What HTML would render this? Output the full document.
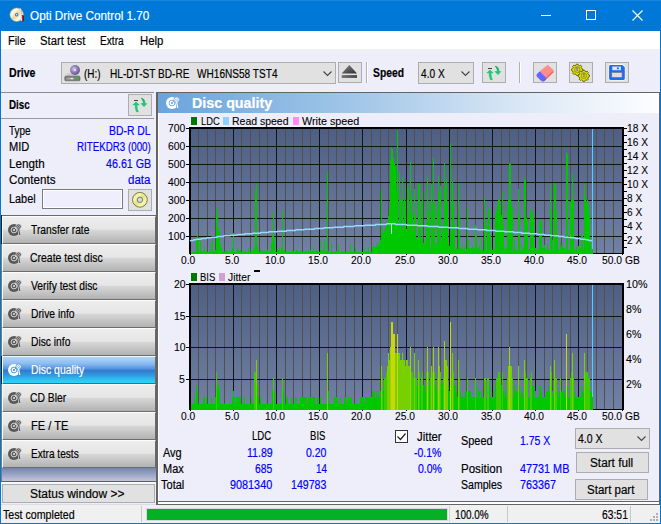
<!DOCTYPE html>
<html><head><meta charset="utf-8"><title>Opti Drive Control 1.70</title>
<style>
*{box-sizing:border-box;margin:0;padding:0}
html,body{width:661px;height:524px;overflow:hidden;background:#eeeefb}
body{font-family:"Liberation Sans",sans-serif;font-size:12px;color:#000;position:relative}
.a{position:absolute;white-space:nowrap}
span.a{-webkit-text-stroke:0.18px}
#win{position:absolute;left:0;top:0;width:661px;height:524px;background:#eeeefb;border:1px solid #0078d7;border-top:none}
#title{left:0;top:0;width:661px;height:31px;background:#0078d7}
#title .t{left:31px;top:8px;color:#fff;font-size:12.4px;letter-spacing:0px}
#menu{left:1px;top:31px;width:659px;height:18px;background:#fff}
#menu span{position:absolute;top:3px;font-size:12.3px}
.b{font-weight:bold}
.tb{position:absolute;top:62px;height:21px;width:24px;background:#e1e1e1;border:1px solid #adadad}
.combo{position:absolute;background:#e1e1e1;border:1px solid #adadad}
.blue{color:#1a1ae6}
.sb{position:absolute;left:2px;width:154px;height:28px;border-top:1px solid #fdfdfd;border-bottom:1px solid #6e6e6e;border-right:1px solid #6a6a6a;border-left:1px solid #fbfbfb;
 background:linear-gradient(#ededed 0%,#e6e6e6 46%,#d6d6d6 52%,#b2b2b2 100%)}
.sb span{position:absolute;left:29px;top:6px;font-size:12px;letter-spacing:-0.1px}
.sb svg{position:absolute;left:4px;top:5px}
.sb.sel{background:linear-gradient(#b2d6f8 0%,#8cbcf0 25%,#4e90de 47%,#3478cc 51%,#2f9ade 70%,#2cc4f2 88%,#28d8ff 100%);border-top-color:#e4fcff;border-bottom-color:#4a688c}
.sb.sel span{color:#fff}
.lbl{position:absolute;left:9px;font-size:12px}
.val{position:absolute;right:510px;font-size:12px;color:#1a1ae6}
.ax{position:absolute;font-size:12px;line-height:12px}
.st{position:absolute;font-size:12px}
.btn{position:absolute;background:#e1e1e1;border:1px solid #adadad;text-align:center;font-size:12px}
</style></head><body>
<div id="win"></div>
<div id="title" class="a"><div class="a" style="left:0;top:0;width:661px;height:1px;background:#1a85db"></div>
 <svg class="a" style="left:8px;top:6px" width="18" height="18" viewBox="0 0 18 18">
  <defs><linearGradient id="cd" x1="0" y1="0" x2="1" y2="1"><stop offset="0" stop-color="#d8c890"/><stop offset="0.28" stop-color="#fffbe8"/><stop offset="0.5" stop-color="#e2d4a4"/><stop offset="0.72" stop-color="#fffbe8"/><stop offset="1" stop-color="#cdbb82"/></linearGradient></defs>
  <circle cx="8.700" cy="8.700" r="6.800" fill="url(#cd)" stroke="#b8a870" stroke-width="0.5"/>
  <circle cx="8.700" cy="8.700" r="1.700" fill="#3a6eb8"/><circle cx="8.700" cy="8.700" r="0.700" fill="#fff"/>
  <path d="M13.600 8.800L15.900 9.400 16 15 13.800 15.600z" fill="#7a0c0c"/>
  <path d="M12.300 2.500L13.600 15" stroke="#e4e4e4" stroke-width="1.300"/><path d="M13.300 3L14.400 14" stroke="#9a9a9a" stroke-width="0.500"/>
 </svg>
 <span class="a" style="left:30.40px;top:9px;font-size:12.3px;line-height:14px;transform:scaleX(0.9544);transform-origin:0 0;color:#fff;">Opti Drive Control 1.70</span>
 <svg class="a" style="left:523px;top:0" width="138" height="31" viewBox="0 0 138 31"><g stroke="#fff" stroke-width="1" fill="none" shape-rendering="crispEdges">
  <path d="M18 15.5h10"/><rect x="63.5" y="10.5" width="9" height="9"/></g>
  <path d="M109.500 10.500l10 10M119.500 10.500l-10 10" stroke="#fff" stroke-width="1.1" fill="none"/></svg>
</div>
<div id="menu" class="a"></div><div class="a" style="left:1px;top:49px;width:659px;height:2px;background:#f0f0f0"></div><span class="a" style="left:8.10px;top:34px;font-size:12.3px;line-height:14px;transform:scaleX(0.8889);transform-origin:0 0;">File</span><span class="a" style="left:40.00px;top:34px;font-size:12.3px;line-height:14px;transform:scaleX(0.9207);transform-origin:0 0;">Start test</span><span class="a" style="left:100.40px;top:34px;font-size:12.3px;line-height:14px;transform:scaleX(0.8264);transform-origin:0 0;">Extra</span><span class="a" style="left:139.50px;top:34px;font-size:12.3px;line-height:14px;transform:scaleX(0.9209);transform-origin:0 0;">Help</span>

<!-- toolbar -->
<div class="combo" style="left:61px;top:62px;width:275px;height:22px">
 <svg class="a" style="left:2px;top:2px" width="18" height="18" viewBox="0 0 18 18"><defs><radialGradient id="gd" cx="40%" cy="40%" r="70%"><stop offset="0" stop-color="#d4cae8"/><stop offset="0.5" stop-color="#8e7cb4"/><stop offset="1" stop-color="#54427c"/></radialGradient></defs><path d="M0.800 11.400L3.600 8.600H13.400L16 11.400z" fill="#c8c8c8"/><rect x="0.800" y="11.200" width="15.200" height="4.600" rx="0.800" fill="#7c7c7c" stroke="#5c5c5c" stroke-width="0.6"/><rect x="2.300" y="12.600" width="8" height="2" fill="#a4a4a4"/><rect x="6.500" y="13.200" width="2.500" height="0.900" fill="#fff"/><circle cx="11" cy="5" r="4.900" fill="url(#gd)"/><circle cx="11" cy="5" r="0.900" fill="#f4f2fc"/><path d="M12 12.200h1.600v2.400h-1.600zM11.600 12.900h2.400v1h-2.400z" fill="#20c820"/></svg>
 
 <svg class="a" style="left:261px;top:8px" width="10" height="6" viewBox="0 0 10 6"><path d="M0.500 0.500L4.500 4.500 8.500 0.500" stroke="#444" stroke-width="1.1" fill="none"/></svg>
</div>
<div class="tb" style="left:338px"><svg class="a" style="left:-1px;top:-1px" width="24" height="22" viewBox="0 0 24 22"><defs><linearGradient id="ge" x1="0" y1="0" x2="1" y2="1"><stop offset="0" stop-color="#8a8a8a"/><stop offset="1" stop-color="#2c2c2c"/></linearGradient></defs><path d="M11.300 3L19 11.400H3.700z" fill="url(#ge)"/><rect x="3.700" y="13" width="15.300" height="2.800" fill="url(#ge)"/></svg></div>
<div class="a" style="left:366px;top:62px;width:1px;height:21px;background:#b0b0b0"></div>
<div class="a" style="left:367px;top:62px;width:1px;height:21px;background:#fff"></div>

<div class="combo" style="left:418px;top:62px;width:56px;height:22px">
 <svg class="a" style="left:42px;top:8px" width="10" height="6" viewBox="0 0 10 6"><path d="M0.500 0.500L4.500 4.500 8.500 0.500" stroke="#444" stroke-width="1.1" fill="none"/></svg></div>
<div class="tb" style="left:482px"><svg class="a" style="left:-1px;top:-1px" width="24" height="22" viewBox="0 0 24 22"><defs><linearGradient id="ga" x1="0" y1="0" x2="1" y2="1"><stop offset="0" stop-color="#1f9a5c"/><stop offset="1" stop-color="#3fd890"/></linearGradient></defs><path d="M8 7.200L12.600 11.600H9.700C9.800 14.500 10.300 16.300 11.400 18.200L8.200 18.600C7 16.400 6.500 14.400 6.500 11.600H3.500z" fill="#2ec27a" stroke="#eafff4" stroke-width="0.5"/><path d="M13.200 3.600C15.800 4 17.600 5.800 17.800 9H20.300L16 13.400 11.800 9H14.600C14.500 7 13.800 5.600 12.600 4.600z" fill="url(#ga)" stroke="#eafff4" stroke-width="0.5"/><rect x="6" y="6" width="4" height="1" fill="#444"/></svg></div>
<div class="a" style="left:519px;top:62px;width:1px;height:21px;background:#b0b0b0"></div>
<div class="a" style="left:520px;top:62px;width:1px;height:21px;background:#fff"></div>
<div class="tb" style="left:533px"><svg class="a" style="left:-1px;top:-1px" width="24" height="22" viewBox="0 0 24 22"><path d="M14.800 2.700L20.500 8 13 15.600 6.800 9.300z" fill="#ff8c8c"/><path d="M20.500 8L20.300 10.400 12.600 18 13 15.600z" fill="#ff5a5a"/><path d="M6.800 9.300L13 15.600 10.400 18.400C9.400 19 8.400 19 7.600 18.400L3.800 14.400C3.200 13.400 3.400 12.600 4 12z" fill="#6464ff"/><path d="M13 15.600L12.600 18 10.400 19.600 8 19 10.400 18.400z" fill="#3232f0"/></svg></div>
<div class="tb" style="left:569px"><svg class="a" style="left:-1px;top:-1px" width="24" height="22" viewBox="0 0 24 22"><path d="M13.8 7.0L13.8 8.6L12.8 9.0L12.2 10.2L12.8 11.2L11.6 12.4L10.6 11.8L9.4 12.4L9.0 13.4L7.4 13.4L7.0 12.4L5.8 11.8L4.8 12.4L3.6 11.2L4.2 10.2L3.6 9.0L2.6 8.6L2.6 7.0L3.6 6.6L4.2 5.4L3.6 4.4L4.8 3.2L5.8 3.8L7.0 3.2L7.4 2.2L9.0 2.2L9.4 3.2L10.6 3.8L11.6 3.2L12.8 4.4L12.2 5.4L12.8 6.6z" fill="#e2e200" stroke="#66660a" stroke-width="1" stroke-linejoin="round"/><circle cx="8.2" cy="7.8" r="2.600" fill="none" stroke="#a8a800" stroke-width="1.200"/><rect x="7.3" y="4.2" width="1.800" height="4.800" fill="#8c8c8c"/><path d="M20.4 13.0L20.4 14.6L19.4 15.0L18.8 16.2L19.4 17.2L18.2 18.4L17.2 17.8L16.0 18.4L15.6 19.4L14.0 19.4L13.6 18.4L12.4 17.8L11.4 18.4L10.2 17.2L10.8 16.2L10.2 15.0L9.2 14.6L9.2 13.0L10.2 12.6L10.8 11.4L10.2 10.4L11.4 9.2L12.4 9.8L13.6 9.2L14.0 8.2L15.6 8.2L16.0 9.2L17.2 9.8L18.2 9.2L19.4 10.4L18.8 11.4L19.4 12.6z" fill="#e2e200" stroke="#66660a" stroke-width="1" stroke-linejoin="round"/><circle cx="14.8" cy="13.8" r="2.600" fill="none" stroke="#a8a800" stroke-width="1.200"/><rect x="13.9" y="10.2" width="1.800" height="4.800" fill="#8c8c8c"/></svg></div>
<div class="tb" style="left:605px"><svg class="a" style="left:-1px;top:-1px" width="24" height="22" viewBox="0 0 24 22"><path d="M5.400 2.300H17.600L20.400 5V17C20.400 17.800 19.800 18.400 19 18.400H5.400C4.400 18.400 3.600 17.800 3.600 17V4C3.600 3 4.400 2.300 5.400 2.300z" fill="#fff"/><path d="M5.600 2.900H17.300L19.800 5.300V16.600C19.800 17.400 19.300 17.900 18.500 17.900H5.600C4.700 17.900 4.100 17.400 4.100 16.600V4.300C4.100 3.500 4.700 2.900 5.600 2.900z" fill="#1c6cf0"/><rect x="7.300" y="4.500" width="8.600" height="3.700" fill="#e4e6f2"/><circle cx="12.900" cy="6.350" r="1.100" fill="#1c6cf0"/><rect x="6.700" y="10.300" width="10.400" height="5.300" fill="#dedede" stroke="#6c6c6c" stroke-width="0.7"/></svg></div>

<span class="a" style="left:9.00px;top:66px;font-size:12.3px;line-height:14px;transform:scaleX(0.8604);transform-origin:0 0;font-weight:bold;">Drive</span><span class="a" style="left:372.90px;top:66px;font-size:12.3px;line-height:14px;transform:scaleX(0.8401);transform-origin:0 0;font-weight:bold;">Speed</span><span class="a" style="left:84.00px;top:67px;font-size:12.3px;line-height:14px;transform:scaleX(0.8049);transform-origin:0 0;">(H:)</span><span class="a" style="left:110.20px;top:67px;font-size:12.3px;line-height:14px;transform:scaleX(0.8202);transform-origin:0 0;">HL-DT-ST BD-RE</span><span class="a" style="left:197.10px;top:67px;font-size:12.3px;line-height:14px;transform:scaleX(0.8198);transform-origin:0 0;">WH16NS58 TST4</span><span class="a" style="left:420.90px;top:67px;font-size:12.3px;line-height:14px;transform:scaleX(0.8258);transform-origin:0 0;">4.0 X</span>
<!-- left panel -->
<div class="a" style="left:1px;top:92px;width:153px;height:1px;background:#8c8c8c"></div>
<div class="a" style="left:1px;top:118px;width:153px;height:1px;background:#9a9a9a"></div>
<span class="a" style="left:9.00px;top:98px;font-size:12.3px;line-height:14px;transform:scaleX(0.8000);transform-origin:0 0;font-weight:bold;">Disc</span><span class="a" style="left:8.80px;top:124px;font-size:12.3px;line-height:14px;transform:scaleX(0.8052);transform-origin:0 0;">Type</span><span class="a" style="left:109.30px;top:124px;font-size:12.3px;line-height:14px;transform:scaleX(0.8455);transform-origin:0 0;color:#0000ff;">BD-R DL</span><span class="a" style="left:8.80px;top:140px;font-size:12.3px;line-height:14px;transform:scaleX(0.9022);transform-origin:0 0;">MID</span><span class="a" style="left:77.10px;top:140px;font-size:12.3px;line-height:14px;transform:scaleX(0.7935);transform-origin:0 0;color:#0000ff;">RITEKDR3 (000)</span><span class="a" style="left:8.80px;top:157px;font-size:12.3px;line-height:14px;transform:scaleX(0.9468);transform-origin:0 0;">Length</span><span class="a" style="left:105.60px;top:157px;font-size:12.3px;line-height:14px;transform:scaleX(0.8712);transform-origin:0 0;color:#0000ff;">46.61 GB</span><span class="a" style="left:8.80px;top:173px;font-size:12.3px;line-height:14px;transform:scaleX(0.9451);transform-origin:0 0;">Contents</span><span class="a" style="left:128.40px;top:173px;font-size:12.3px;line-height:14px;transform:scaleX(0.9375);transform-origin:0 0;color:#0000ff;">data</span><span class="a" style="left:8.80px;top:192px;font-size:12.3px;line-height:14px;transform:scaleX(0.8837);transform-origin:0 0;">Label</span>
<div class="tb" style="left:128px;top:94px;height:22px"><svg class="a" style="left:-1px;top:-1px" width="24" height="22" viewBox="0 0 24 22"><defs><linearGradient id="ga" x1="0" y1="0" x2="1" y2="1"><stop offset="0" stop-color="#1f9a5c"/><stop offset="1" stop-color="#3fd890"/></linearGradient></defs><path d="M8 7.200L12.600 11.600H9.700C9.800 14.500 10.300 16.300 11.400 18.200L8.200 18.600C7 16.400 6.500 14.400 6.500 11.600H3.500z" fill="#2ec27a" stroke="#eafff4" stroke-width="0.5"/><path d="M13.200 3.600C15.800 4 17.600 5.800 17.800 9H20.300L16 13.400 11.800 9H14.600C14.500 7 13.800 5.600 12.600 4.600z" fill="url(#ga)" stroke="#eafff4" stroke-width="0.5"/><rect x="6" y="6" width="4" height="1" fill="#444"/></svg></div>
<div class="a" style="left:42px;top:189px;width:81px;height:20px;border:1px solid #7a7a7a;background:#eeeefd;box-shadow:inset 0 0 0 1px #fff"></div>
<div class="tb" style="left:128px;top:189px;height:22px"><svg class="a" style="left:-1px;top:-1px" width="24" height="22" viewBox="0 0 24 22"><defs><linearGradient id="gy" x1="0" y1="0" x2="1" y2="1"><stop offset="0" stop-color="#dcdc70"/><stop offset="0.3" stop-color="#f6f6b4"/><stop offset="0.5" stop-color="#e2e278"/><stop offset="0.7" stop-color="#f6f6b4"/><stop offset="1" stop-color="#dcdc70"/></linearGradient></defs><circle cx="11.900" cy="10.800" r="7.400" fill="url(#gy)" stroke="#606030" stroke-width="0.8"/><circle cx="11.900" cy="10.800" r="2.700" fill="#d4dcd4" stroke="#707878" stroke-width="1"/></svg></div>

<div class="a" style="left:1px;top:215px;width:156px;height:1px;background:#6a6a6a"></div>
<div class="a" style="left:2px;top:468px;width:154px;height:13px;background:linear-gradient(#7385ae,#c2c4da)"></div>
<div class="a" style="left:1px;top:481px;width:155px;height:1px;background:#606060"></div>
<div class="a" style="left:1px;top:482px;width:155px;height:2px;background:#f8f8ff"></div>
<div class="a" style="left:1px;top:216px;width:1px;height:265px;background:#7c7c7c"></div>
<div class="sb" style="top:216px"><svg width="20" height="16" viewBox="0 0 20 16"><circle cx="7" cy="8" r="6" fill="#585858"/><circle cx="7" cy="8" r="2.900" fill="none" stroke="#dedede" stroke-width="0.9"/><circle cx="7" cy="8" r="1.100" fill="#dedede"/><path d="M7.500 7.500L11 3.500" stroke="#dedede" stroke-width="1"/><circle cx="11.600" cy="4.600" r="2.700" fill="#585858" stroke="#dedede" stroke-width="0.8"/><circle cx="11.600" cy="4.600" r="1" fill="none" stroke="#dedede" stroke-width="0.6"/><path d="M11.400 7L12.800 13.200" stroke="#dedede" stroke-width="2.200"/><path d="M11.600 7L12.800 13" stroke="#585858" stroke-width="1.200"/></svg></div><span class="a" style="left:31.10px;top:223px;font-size:12.6px;line-height:14px;transform:scaleX(0.8159);transform-origin:0 0;color:#000;">Transfer rate</span>
<div class="sb" style="top:244px"><svg width="20" height="16" viewBox="0 0 20 16"><circle cx="7" cy="8" r="6" fill="#585858"/><circle cx="7" cy="8" r="2.900" fill="none" stroke="#dedede" stroke-width="0.9"/><circle cx="7" cy="8" r="1.100" fill="#dedede"/><path d="M7.500 7.500L11 3.500" stroke="#dedede" stroke-width="1"/><circle cx="11.600" cy="4.600" r="2.700" fill="#585858" stroke="#dedede" stroke-width="0.8"/><circle cx="11.600" cy="4.600" r="1" fill="none" stroke="#dedede" stroke-width="0.6"/><path d="M11.400 7L12.800 13.200" stroke="#dedede" stroke-width="2.200"/><path d="M11.600 7L12.800 13" stroke="#585858" stroke-width="1.200"/></svg></div><span class="a" style="left:30.30px;top:251px;font-size:12.6px;line-height:14px;transform:scaleX(0.8309);transform-origin:0 0;color:#000;">Create test disc</span>
<div class="sb" style="top:272px"><svg width="20" height="16" viewBox="0 0 20 16"><circle cx="7" cy="8" r="6" fill="#585858"/><circle cx="7" cy="8" r="2.900" fill="none" stroke="#dedede" stroke-width="0.9"/><circle cx="7" cy="8" r="1.100" fill="#dedede"/><path d="M7.500 7.500L11 3.500" stroke="#dedede" stroke-width="1"/><circle cx="11.600" cy="4.600" r="2.700" fill="#585858" stroke="#dedede" stroke-width="0.8"/><circle cx="11.600" cy="4.600" r="1" fill="none" stroke="#dedede" stroke-width="0.6"/><path d="M11.400 7L12.800 13.200" stroke="#dedede" stroke-width="2.200"/><path d="M11.600 7L12.800 13" stroke="#585858" stroke-width="1.200"/></svg></div><span class="a" style="left:31.10px;top:279px;font-size:12.6px;line-height:14px;transform:scaleX(0.8190);transform-origin:0 0;color:#000;">Verify test disc</span>
<div class="sb" style="top:300px"><svg width="20" height="16" viewBox="0 0 20 16"><circle cx="7" cy="8" r="6" fill="#585858"/><circle cx="7" cy="8" r="2.900" fill="none" stroke="#dedede" stroke-width="0.9"/><circle cx="7" cy="8" r="1.100" fill="#dedede"/><path d="M7.500 7.500L11 3.500" stroke="#dedede" stroke-width="1"/><circle cx="11.600" cy="4.600" r="2.700" fill="#585858" stroke="#dedede" stroke-width="0.8"/><circle cx="11.600" cy="4.600" r="1" fill="none" stroke="#dedede" stroke-width="0.6"/><path d="M11.400 7L12.800 13.200" stroke="#dedede" stroke-width="2.200"/><path d="M11.600 7L12.800 13" stroke="#585858" stroke-width="1.200"/></svg></div><span class="a" style="left:31.10px;top:307px;font-size:12.6px;line-height:14px;transform:scaleX(0.8177);transform-origin:0 0;color:#000;">Drive info</span>
<div class="sb" style="top:328px"><svg width="20" height="16" viewBox="0 0 20 16"><circle cx="7" cy="8" r="6" fill="#585858"/><circle cx="7" cy="8" r="2.900" fill="none" stroke="#dedede" stroke-width="0.9"/><circle cx="7" cy="8" r="1.100" fill="#dedede"/><path d="M7.500 7.500L11 3.500" stroke="#dedede" stroke-width="1"/><circle cx="11.600" cy="4.600" r="2.700" fill="#585858" stroke="#dedede" stroke-width="0.8"/><circle cx="11.600" cy="4.600" r="1" fill="none" stroke="#dedede" stroke-width="0.6"/><path d="M11.400 7L12.800 13.200" stroke="#dedede" stroke-width="2.200"/><path d="M11.600 7L12.800 13" stroke="#585858" stroke-width="1.200"/></svg></div><span class="a" style="left:31.10px;top:335px;font-size:12.6px;line-height:14px;transform:scaleX(0.8157);transform-origin:0 0;color:#000;">Disc info</span>
<div class="sb sel" style="top:356px"><svg width="20" height="16" viewBox="0 0 20 16"><circle cx="7" cy="8" r="6" fill="#ffffff"/><circle cx="7" cy="8" r="2.900" fill="none" stroke="#3f8fe8" stroke-width="0.9"/><circle cx="7" cy="8" r="1.100" fill="#3f8fe8"/><path d="M7.500 7.500L11 3.500" stroke="#3f8fe8" stroke-width="1"/><circle cx="11.600" cy="4.600" r="2.700" fill="#ffffff" stroke="#3f8fe8" stroke-width="0.8"/><circle cx="11.600" cy="4.600" r="1" fill="none" stroke="#3f8fe8" stroke-width="0.6"/><path d="M11.400 7L12.800 13.200" stroke="#3f8fe8" stroke-width="2.200"/><path d="M11.600 7L12.800 13" stroke="#ffffff" stroke-width="1.200"/></svg></div><span class="a" style="left:31.10px;top:363px;font-size:12.6px;line-height:14px;transform:scaleX(0.8261);transform-origin:0 0;color:#fff;">Disc quality</span>
<div class="sb" style="top:384px"><svg width="20" height="16" viewBox="0 0 20 16"><circle cx="7" cy="8" r="6" fill="#585858"/><circle cx="7" cy="8" r="2.900" fill="none" stroke="#dedede" stroke-width="0.9"/><circle cx="7" cy="8" r="1.100" fill="#dedede"/><path d="M7.500 7.500L11 3.500" stroke="#dedede" stroke-width="1"/><circle cx="11.600" cy="4.600" r="2.700" fill="#585858" stroke="#dedede" stroke-width="0.8"/><circle cx="11.600" cy="4.600" r="1" fill="none" stroke="#dedede" stroke-width="0.6"/><path d="M11.400 7L12.800 13.200" stroke="#dedede" stroke-width="2.200"/><path d="M11.600 7L12.800 13" stroke="#585858" stroke-width="1.200"/></svg></div><span class="a" style="left:30.30px;top:391px;font-size:12.6px;line-height:14px;transform:scaleX(0.8231);transform-origin:0 0;color:#000;">CD Bler</span>
<div class="sb" style="top:412px"><svg width="20" height="16" viewBox="0 0 20 16"><circle cx="7" cy="8" r="6" fill="#585858"/><circle cx="7" cy="8" r="2.900" fill="none" stroke="#dedede" stroke-width="0.9"/><circle cx="7" cy="8" r="1.100" fill="#dedede"/><path d="M7.500 7.500L11 3.500" stroke="#dedede" stroke-width="1"/><circle cx="11.600" cy="4.600" r="2.700" fill="#585858" stroke="#dedede" stroke-width="0.8"/><circle cx="11.600" cy="4.600" r="1" fill="none" stroke="#dedede" stroke-width="0.6"/><path d="M11.400 7L12.800 13.200" stroke="#dedede" stroke-width="2.200"/><path d="M11.600 7L12.800 13" stroke="#585858" stroke-width="1.200"/></svg></div><span class="a" style="left:31.10px;top:419px;font-size:12.6px;line-height:14px;transform:scaleX(0.8824);transform-origin:0 0;color:#000;">FE / TE</span>
<div class="sb" style="top:440px"><svg width="20" height="16" viewBox="0 0 20 16"><circle cx="7" cy="8" r="6" fill="#585858"/><circle cx="7" cy="8" r="2.900" fill="none" stroke="#dedede" stroke-width="0.9"/><circle cx="7" cy="8" r="1.100" fill="#dedede"/><path d="M7.500 7.500L11 3.500" stroke="#dedede" stroke-width="1"/><circle cx="11.600" cy="4.600" r="2.700" fill="#585858" stroke="#dedede" stroke-width="0.8"/><circle cx="11.600" cy="4.600" r="1" fill="none" stroke="#dedede" stroke-width="0.6"/><path d="M11.400 7L12.800 13.200" stroke="#dedede" stroke-width="2.200"/><path d="M11.600 7L12.800 13" stroke="#585858" stroke-width="1.200"/></svg></div><span class="a" style="left:31.10px;top:447px;font-size:12.6px;line-height:14px;transform:scaleX(0.8017);transform-origin:0 0;color:#000;">Extra tests</span>
<div class="a" style="left:1px;top:215px;width:1px;height:29px;background:#1a1a1a"></div><div class="a" style="left:1px;top:356px;width:1px;height:28px;background:#1a1a1a"></div>
<div class="btn" style="left:2px;top:484px;width:153px;height:19px"></div><span class="a" style="left:29.90px;top:487px;font-size:12.3px;line-height:14px;transform:scaleX(0.9722);transform-origin:0 0;">Status window &gt;&gt;</span>

<!-- main panel -->
<div class="a" style="left:156px;top:92px;width:504px;height:413px;border:1px solid #646464;border-width:1px 1px 1px 2px"></div>
<div class="a" style="left:158px;top:501px;width:501px;height:1px;background:#646464"></div>
<div class="a" style="left:158px;top:502px;width:501px;height:2px;background:#fff"></div>
<div class="a" style="left:158px;top:113px;width:1px;height:388px;background:#fff"></div>
<div class="a" style="left:158px;top:93px;width:501px;height:20px;background:linear-gradient(90deg,#6aa4db 0%,#a6c9e9 42%,#d9e7f5 72%,#fefeff 100%)"></div>
<svg class="a" style="left:165px;top:95px" width="20" height="16" viewBox="0 0 20 16"><circle cx="7" cy="8" r="6" fill="#ffffff"/><circle cx="7" cy="8" r="2.900" fill="none" stroke="#6ea7dc" stroke-width="0.9"/><circle cx="7" cy="8" r="1.100" fill="#6ea7dc"/><path d="M7.500 7.500L11 3.500" stroke="#6ea7dc" stroke-width="1"/><circle cx="11.600" cy="4.600" r="2.700" fill="#ffffff" stroke="#6ea7dc" stroke-width="0.8"/><circle cx="11.600" cy="4.600" r="1" fill="none" stroke="#6ea7dc" stroke-width="0.6"/><path d="M11.400 7L12.800 13.200" stroke="#6ea7dc" stroke-width="2.200"/><path d="M11.600 7L12.800 13" stroke="#ffffff" stroke-width="1.200"/></svg><span class="a" style="left:191.60px;top:95px;font-size:14px;line-height:16px;transform:scaleX(1.0204);transform-origin:0 0;font-weight:bold;color:#fff;">Disc quality</span>

<svg class="a" style="left:0;top:0" width="661" height="524" viewBox="0 0 661 524" shape-rendering="crispEdges">
<defs><linearGradient id="pg" x1="0" y1="0" x2="0" y2="1"><stop offset="0" stop-color="#4f5f84"/><stop offset="1" stop-color="#7081a3"/></linearGradient></defs>
<rect x="189" y="127" width="435" height="127" fill="#000"/>
<rect x="191" y="129" width="431" height="124" fill="url(#pg)"/>
<rect x="198" y="129" width="1" height="124" fill="#505050"/><rect x="207" y="129" width="1" height="124" fill="#505050"/><rect x="215" y="129" width="1" height="124" fill="#505050"/><rect x="224" y="129" width="1" height="124" fill="#505050"/><rect x="233" y="129" width="1" height="124" fill="#141414"/><rect x="241" y="129" width="1" height="124" fill="#505050"/><rect x="250" y="129" width="1" height="124" fill="#505050"/><rect x="259" y="129" width="1" height="124" fill="#505050"/><rect x="267" y="129" width="1" height="124" fill="#505050"/><rect x="276" y="129" width="1" height="124" fill="#141414"/><rect x="285" y="129" width="1" height="124" fill="#505050"/><rect x="293" y="129" width="1" height="124" fill="#505050"/><rect x="302" y="129" width="1" height="124" fill="#505050"/><rect x="310" y="129" width="1" height="124" fill="#505050"/><rect x="319" y="129" width="1" height="124" fill="#141414"/><rect x="328" y="129" width="1" height="124" fill="#505050"/><rect x="336" y="129" width="1" height="124" fill="#505050"/><rect x="345" y="129" width="1" height="124" fill="#505050"/><rect x="354" y="129" width="1" height="124" fill="#505050"/><rect x="362" y="129" width="1" height="124" fill="#141414"/><rect x="371" y="129" width="1" height="124" fill="#505050"/><rect x="380" y="129" width="1" height="124" fill="#505050"/><rect x="388" y="129" width="1" height="124" fill="#505050"/><rect x="397" y="129" width="1" height="124" fill="#505050"/><rect x="406" y="129" width="1" height="124" fill="#141414"/><rect x="414" y="129" width="1" height="124" fill="#505050"/><rect x="423" y="129" width="1" height="124" fill="#505050"/><rect x="431" y="129" width="1" height="124" fill="#505050"/><rect x="440" y="129" width="1" height="124" fill="#505050"/><rect x="449" y="129" width="1" height="124" fill="#141414"/><rect x="457" y="129" width="1" height="124" fill="#505050"/><rect x="466" y="129" width="1" height="124" fill="#505050"/><rect x="475" y="129" width="1" height="124" fill="#505050"/><rect x="483" y="129" width="1" height="124" fill="#505050"/><rect x="492" y="129" width="1" height="124" fill="#141414"/><rect x="501" y="129" width="1" height="124" fill="#505050"/><rect x="509" y="129" width="1" height="124" fill="#505050"/><rect x="518" y="129" width="1" height="124" fill="#505050"/><rect x="526" y="129" width="1" height="124" fill="#505050"/><rect x="535" y="129" width="1" height="124" fill="#141414"/><rect x="544" y="129" width="1" height="124" fill="#505050"/><rect x="552" y="129" width="1" height="124" fill="#505050"/><rect x="561" y="129" width="1" height="124" fill="#505050"/><rect x="570" y="129" width="1" height="124" fill="#505050"/><rect x="578" y="129" width="1" height="124" fill="#141414"/><rect x="587" y="129" width="1" height="124" fill="#505050"/><rect x="596" y="129" width="1" height="124" fill="#505050"/><rect x="604" y="129" width="1" height="124" fill="#505050"/><rect x="613" y="129" width="1" height="124" fill="#505050"/><rect x="190.0" y="146" width="432.0" height="1" fill="#141414"/><rect x="190.0" y="164" width="432.0" height="1" fill="#141414"/><rect x="190.0" y="182" width="432.0" height="1" fill="#141414"/><rect x="190.0" y="200" width="432.0" height="1" fill="#141414"/><rect x="190.0" y="218" width="432.0" height="1" fill="#141414"/><rect x="190.0" y="236" width="432.0" height="1" fill="#141414"/>
<rect x="189" y="283" width="435" height="127" fill="#000"/>
<rect x="191" y="285" width="431" height="124" fill="url(#pg)"/>
<rect x="198" y="285" width="1" height="124" fill="#505050"/><rect x="207" y="285" width="1" height="124" fill="#505050"/><rect x="215" y="285" width="1" height="124" fill="#505050"/><rect x="224" y="285" width="1" height="124" fill="#505050"/><rect x="233" y="285" width="1" height="124" fill="#141414"/><rect x="241" y="285" width="1" height="124" fill="#505050"/><rect x="250" y="285" width="1" height="124" fill="#505050"/><rect x="259" y="285" width="1" height="124" fill="#505050"/><rect x="267" y="285" width="1" height="124" fill="#505050"/><rect x="276" y="285" width="1" height="124" fill="#141414"/><rect x="285" y="285" width="1" height="124" fill="#505050"/><rect x="293" y="285" width="1" height="124" fill="#505050"/><rect x="302" y="285" width="1" height="124" fill="#505050"/><rect x="310" y="285" width="1" height="124" fill="#505050"/><rect x="319" y="285" width="1" height="124" fill="#141414"/><rect x="328" y="285" width="1" height="124" fill="#505050"/><rect x="336" y="285" width="1" height="124" fill="#505050"/><rect x="345" y="285" width="1" height="124" fill="#505050"/><rect x="354" y="285" width="1" height="124" fill="#505050"/><rect x="362" y="285" width="1" height="124" fill="#141414"/><rect x="371" y="285" width="1" height="124" fill="#505050"/><rect x="380" y="285" width="1" height="124" fill="#505050"/><rect x="388" y="285" width="1" height="124" fill="#505050"/><rect x="397" y="285" width="1" height="124" fill="#505050"/><rect x="406" y="285" width="1" height="124" fill="#141414"/><rect x="414" y="285" width="1" height="124" fill="#505050"/><rect x="423" y="285" width="1" height="124" fill="#505050"/><rect x="431" y="285" width="1" height="124" fill="#505050"/><rect x="440" y="285" width="1" height="124" fill="#505050"/><rect x="449" y="285" width="1" height="124" fill="#141414"/><rect x="457" y="285" width="1" height="124" fill="#505050"/><rect x="466" y="285" width="1" height="124" fill="#505050"/><rect x="475" y="285" width="1" height="124" fill="#505050"/><rect x="483" y="285" width="1" height="124" fill="#505050"/><rect x="492" y="285" width="1" height="124" fill="#141414"/><rect x="501" y="285" width="1" height="124" fill="#505050"/><rect x="509" y="285" width="1" height="124" fill="#505050"/><rect x="518" y="285" width="1" height="124" fill="#505050"/><rect x="526" y="285" width="1" height="124" fill="#505050"/><rect x="535" y="285" width="1" height="124" fill="#141414"/><rect x="544" y="285" width="1" height="124" fill="#505050"/><rect x="552" y="285" width="1" height="124" fill="#505050"/><rect x="561" y="285" width="1" height="124" fill="#505050"/><rect x="570" y="285" width="1" height="124" fill="#505050"/><rect x="578" y="285" width="1" height="124" fill="#141414"/><rect x="587" y="285" width="1" height="124" fill="#505050"/><rect x="596" y="285" width="1" height="124" fill="#505050"/><rect x="604" y="285" width="1" height="124" fill="#505050"/><rect x="613" y="285" width="1" height="124" fill="#505050"/><rect x="190.0" y="316" width="432.0" height="1" fill="#141414"/><rect x="190.0" y="347" width="432.0" height="1" fill="#141414"/><rect x="190.0" y="379" width="432.0" height="1" fill="#141414"/>
<rect x="186" y="236" width="3" height="1" fill="#000"/>
<rect x="186" y="218" width="3" height="1" fill="#000"/>
<rect x="186" y="200" width="3" height="1" fill="#000"/>
<rect x="186" y="182" width="3" height="1" fill="#000"/>
<rect x="186" y="164" width="3" height="1" fill="#000"/>
<rect x="186" y="146" width="3" height="1" fill="#000"/>
<rect x="186" y="128" width="3" height="1" fill="#000"/>
<rect x="186" y="379" width="3" height="1" fill="#000"/>
<rect x="186" y="347" width="3" height="1" fill="#000"/>
<rect x="186" y="316" width="3" height="1" fill="#000"/>
<rect x="186" y="284" width="3" height="1" fill="#000"/>
<rect x="624" y="247" width="3" height="1" fill="#000"/>
<rect x="624" y="240" width="3" height="1" fill="#000"/>
<rect x="624" y="233" width="3" height="1" fill="#000"/>
<rect x="624" y="226" width="3" height="1" fill="#000"/>
<rect x="624" y="219" width="3" height="1" fill="#000"/>
<rect x="624" y="212" width="3" height="1" fill="#000"/>
<rect x="624" y="205" width="3" height="1" fill="#000"/>
<rect x="624" y="198" width="3" height="1" fill="#000"/>
<rect x="624" y="191" width="3" height="1" fill="#000"/>
<rect x="624" y="184" width="3" height="1" fill="#000"/>
<rect x="624" y="177" width="3" height="1" fill="#000"/>
<rect x="624" y="170" width="3" height="1" fill="#000"/>
<rect x="624" y="163" width="3" height="1" fill="#000"/>
<rect x="624" y="156" width="3" height="1" fill="#000"/>
<rect x="624" y="149" width="3" height="1" fill="#000"/>
<rect x="624" y="142" width="3" height="1" fill="#000"/>
<rect x="624" y="135" width="3" height="1" fill="#000"/>
<rect x="624" y="128" width="3" height="1" fill="#000"/>
<rect x="190" y="254" width="1" height="1" fill="#000"/>
<rect x="233" y="254" width="1" height="1" fill="#000"/>
<rect x="276" y="254" width="1" height="1" fill="#000"/>
<rect x="319" y="254" width="1" height="1" fill="#000"/>
<rect x="362" y="254" width="1" height="1" fill="#000"/>
<rect x="406" y="254" width="1" height="1" fill="#000"/>
<rect x="449" y="254" width="1" height="1" fill="#000"/>
<rect x="492" y="254" width="1" height="1" fill="#000"/>
<rect x="535" y="254" width="1" height="1" fill="#000"/>
<rect x="578" y="254" width="1" height="1" fill="#000"/>
<rect x="622" y="254" width="1" height="1" fill="#000"/>
<rect x="190" y="410" width="1" height="1" fill="#000"/>
<rect x="233" y="410" width="1" height="1" fill="#000"/>
<rect x="276" y="410" width="1" height="1" fill="#000"/>
<rect x="319" y="410" width="1" height="1" fill="#000"/>
<rect x="362" y="410" width="1" height="1" fill="#000"/>
<rect x="406" y="410" width="1" height="1" fill="#000"/>
<rect x="449" y="410" width="1" height="1" fill="#000"/>
<rect x="492" y="410" width="1" height="1" fill="#000"/>
<rect x="535" y="410" width="1" height="1" fill="#000"/>
<rect x="578" y="410" width="1" height="1" fill="#000"/>
<rect x="622" y="410" width="1" height="1" fill="#000"/>
<rect x="592" y="129" width="1" height="124" fill="#50d0ff"/><rect x="592" y="285" width="1" height="124" fill="#50d0ff"/>
<path d="M191 252h1V254h-1zM192 252h1V254h-1zM193 252h1V254h-1zM194 252h1V254h-1zM195 252h1V254h-1zM196 240h1V254h-1zM197 235h1V254h-1zM198 238h1V254h-1zM199 252h1V254h-1zM200 241h1V254h-1zM201 251h1V254h-1zM202 252h1V254h-1zM203 251h1V254h-1zM204 247h1V254h-1zM205 252h1V254h-1zM206 251h1V254h-1zM207 252h1V254h-1zM208 252h1V254h-1zM209 252h1V254h-1zM210 243h1V254h-1zM211 251h1V254h-1zM212 239h1V254h-1zM213 252h1V254h-1zM214 251h1V254h-1zM215 250h1V254h-1zM216 208h1V254h-1zM217 214h1V254h-1zM218 228h1V254h-1zM219 232h1V254h-1zM220 244h1V254h-1zM221 248h1V254h-1zM222 252h1V254h-1zM223 252h1V254h-1zM224 252h1V254h-1zM225 252h1V254h-1zM226 250h1V254h-1zM227 252h1V254h-1zM228 252h1V254h-1zM229 252h1V254h-1zM230 252h1V254h-1zM231 250h1V254h-1zM232 248h1V254h-1zM233 233h1V254h-1zM234 252h1V254h-1zM235 252h1V254h-1zM236 252h1V254h-1zM237 248h1V254h-1zM238 249h1V254h-1zM239 251h1V254h-1zM240 250h1V254h-1zM241 252h1V254h-1zM242 252h1V254h-1zM243 252h1V254h-1zM244 252h1V254h-1zM245 251h1V254h-1zM246 252h1V254h-1zM247 252h1V254h-1zM248 248h1V254h-1zM249 252h1V254h-1zM250 252h1V254h-1zM251 252h1V254h-1zM252 251h1V254h-1zM253 250h1V254h-1zM254 247h1V254h-1zM255 190h1V254h-1zM256 184h1V254h-1zM257 247h1V254h-1zM258 252h1V254h-1zM259 252h1V254h-1zM260 250h1V254h-1zM261 252h1V254h-1zM262 251h1V254h-1zM263 252h1V254h-1zM264 251h1V254h-1zM265 252h1V254h-1zM266 250h1V254h-1zM267 250h1V254h-1zM268 252h1V254h-1zM269 252h1V254h-1zM270 252h1V254h-1zM271 243h1V254h-1zM272 236h1V254h-1zM273 212h1V254h-1zM274 238h1V254h-1zM275 251h1V254h-1zM276 252h1V254h-1zM277 250h1V254h-1zM278 250h1V254h-1zM279 248h1V254h-1zM280 252h1V254h-1zM281 248h1V254h-1zM282 210h1V254h-1zM283 252h1V254h-1zM284 250h1V254h-1zM285 252h1V254h-1zM286 252h1V254h-1zM287 252h1V254h-1zM288 252h1V254h-1zM289 252h1V254h-1zM290 252h1V254h-1zM291 252h1V254h-1zM292 250h1V254h-1zM293 251h1V254h-1zM294 252h1V254h-1zM295 252h1V254h-1zM296 250h1V254h-1zM297 250h1V254h-1zM298 252h1V254h-1zM299 252h1V254h-1zM300 250h1V254h-1zM301 252h1V254h-1zM302 252h1V254h-1zM303 252h1V254h-1zM304 252h1V254h-1zM305 251h1V254h-1zM306 251h1V254h-1zM307 252h1V254h-1zM308 250h1V254h-1zM309 252h1V254h-1zM310 250h1V254h-1zM311 252h1V254h-1zM312 252h1V254h-1zM313 248h1V254h-1zM314 252h1V254h-1zM315 251h1V254h-1zM316 250h1V254h-1zM317 252h1V254h-1zM318 252h1V254h-1zM319 252h1V254h-1zM320 241h1V254h-1zM321 250h1V254h-1zM322 251h1V254h-1zM323 249h1V254h-1zM324 241h1V254h-1zM325 251h1V254h-1zM326 252h1V254h-1zM327 172h1V254h-1zM328 251h1V254h-1zM329 252h1V254h-1zM330 252h1V254h-1zM331 244h1V254h-1zM332 252h1V254h-1zM333 252h1V254h-1zM334 252h1V254h-1zM335 251h1V254h-1zM336 251h1V254h-1zM337 251h1V254h-1zM338 245h1V254h-1zM339 252h1V254h-1zM340 252h1V254h-1zM341 251h1V254h-1zM342 252h1V254h-1zM343 252h1V254h-1zM344 252h1V254h-1zM345 252h1V254h-1zM346 252h1V254h-1zM347 251h1V254h-1zM348 252h1V254h-1zM349 252h1V254h-1zM350 244h1V254h-1zM351 252h1V254h-1zM352 252h1V254h-1zM353 252h1V254h-1zM354 252h1V254h-1zM355 247h1V254h-1zM356 252h1V254h-1zM357 252h1V254h-1zM358 252h1V254h-1zM359 252h1V254h-1zM360 252h1V254h-1zM361 252h1V254h-1zM362 252h1V254h-1zM363 252h1V254h-1zM364 247h1V254h-1zM365 252h1V254h-1zM366 252h1V254h-1zM367 251h1V254h-1zM368 247h1V254h-1zM369 252h1V254h-1zM370 252h1V254h-1zM371 252h1V254h-1zM372 248h1V254h-1zM373 246h1V254h-1zM374 247h1V254h-1zM375 247h1V254h-1zM376 244h1V254h-1zM377 247h1V254h-1zM378 242h1V254h-1zM379 244h1V254h-1zM380 240h1V254h-1zM381 190h1V254h-1zM382 230h1V254h-1zM383 233h1V254h-1zM384 231h1V254h-1zM385 228h1V254h-1zM386 224h1V254h-1zM387 221h1V254h-1zM388 216h1V254h-1zM389 209h1V254h-1zM390 160h1V254h-1zM391 147h1V254h-1zM392 149h1V254h-1zM393 158h1V254h-1zM394 163h1V254h-1zM395 166h1V254h-1zM396 190h1V254h-1zM397 130h1V254h-1zM398 223h1V254h-1zM399 172h1V254h-1zM400 200h1V254h-1zM401 199h1V254h-1zM402 177h1V254h-1zM403 229h1V254h-1zM404 199h1V254h-1zM405 201h1V254h-1zM406 229h1V254h-1zM407 185h1V254h-1zM408 188h1V254h-1zM409 215h1V254h-1zM410 162h1V254h-1zM411 196h1V254h-1zM412 212h1V254h-1zM413 232h1V254h-1zM414 189h1V254h-1zM415 216h1V254h-1zM416 238h1V254h-1zM417 239h1V254h-1zM418 183h1V254h-1zM419 184h1V254h-1zM420 203h1V254h-1zM421 239h1V254h-1zM422 191h1V254h-1zM423 243h1V254h-1zM424 244h1V254h-1zM425 241h1V254h-1zM426 222h1V254h-1zM427 177h1V254h-1zM428 201h1V254h-1zM429 212h1V254h-1zM430 249h1V254h-1zM431 184h1V254h-1zM432 204h1V254h-1zM433 158h1V254h-1zM434 202h1V254h-1zM435 245h1V254h-1zM436 244h1V254h-1zM437 210h1V254h-1zM438 176h1V254h-1zM439 192h1V254h-1zM440 186h1V254h-1zM441 242h1V254h-1zM442 232h1V254h-1zM443 223h1V254h-1zM444 163h1V254h-1zM445 186h1V254h-1zM446 179h1V254h-1zM447 203h1V254h-1zM448 243h1V254h-1zM449 246h1V254h-1zM450 143h1V254h-1zM451 233h1V254h-1zM452 181h1V254h-1zM453 202h1V254h-1zM454 224h1V254h-1zM455 249h1V254h-1zM456 248h1V254h-1zM457 249h1V254h-1zM458 183h1V254h-1zM459 215h1V254h-1zM460 248h1V254h-1zM461 249h1V254h-1zM462 244h1V254h-1zM463 249h1V254h-1zM464 246h1V254h-1zM465 251h1V254h-1zM466 249h1V254h-1zM467 207h1V254h-1zM468 240h1V254h-1zM469 248h1V254h-1zM470 248h1V254h-1zM471 249h1V254h-1zM472 246h1V254h-1zM473 248h1V254h-1zM474 248h1V254h-1zM475 225h1V254h-1zM476 236h1V254h-1zM477 249h1V254h-1zM478 248h1V254h-1zM479 245h1V254h-1zM480 250h1V254h-1zM481 238h1V254h-1zM482 250h1V254h-1zM483 251h1V254h-1zM484 197h1V254h-1zM485 220h1V254h-1zM486 251h1V254h-1zM487 225h1V254h-1zM488 209h1V254h-1zM489 209h1V254h-1zM490 235h1V254h-1zM491 249h1V254h-1zM492 250h1V254h-1zM493 248h1V254h-1zM494 250h1V254h-1zM495 215h1V254h-1zM496 205h1V254h-1zM497 210h1V254h-1zM498 200h1V254h-1zM499 198h1V254h-1zM500 205h1V254h-1zM501 215h1V254h-1zM502 192h1V254h-1zM503 225h1V254h-1zM504 249h1V254h-1zM505 249h1V254h-1zM506 248h1V254h-1zM507 210h1V254h-1zM508 200h1V254h-1zM509 163h1V254h-1zM510 164h1V254h-1zM511 203h1V254h-1zM512 208h1V254h-1zM513 251h1V254h-1zM514 240h1V254h-1zM515 249h1V254h-1zM516 250h1V254h-1zM517 251h1V254h-1zM518 189h1V254h-1zM519 215h1V254h-1zM520 251h1V254h-1zM521 244h1V254h-1zM522 249h1V254h-1zM523 248h1V254h-1zM524 178h1V254h-1zM525 180h1V254h-1zM526 218h1V254h-1zM527 220h1V254h-1zM528 250h1V254h-1zM529 249h1V254h-1zM530 212h1V254h-1zM531 209h1V254h-1zM532 211h1V254h-1zM533 218h1V254h-1zM534 248h1V254h-1zM535 248h1V254h-1zM536 251h1V254h-1zM537 249h1V254h-1zM538 249h1V254h-1zM539 222h1V254h-1zM540 219h1V254h-1zM541 222h1V254h-1zM542 248h1V254h-1zM543 248h1V254h-1zM544 245h1V254h-1zM545 249h1V254h-1zM546 250h1V254h-1zM547 244h1V254h-1zM548 249h1V254h-1zM549 250h1V254h-1zM550 185h1V254h-1zM551 210h1V254h-1zM552 240h1V254h-1zM553 251h1V254h-1zM554 183h1V254h-1zM555 184h1V254h-1zM556 210h1V254h-1zM557 235h1V254h-1zM558 249h1V254h-1zM559 250h1V254h-1zM560 242h1V254h-1zM561 246h1V254h-1zM562 246h1V254h-1zM563 248h1V254h-1zM564 248h1V254h-1zM565 250h1V254h-1zM566 152h1V254h-1zM567 154h1V254h-1zM568 249h1V254h-1zM569 251h1V254h-1zM570 202h1V254h-1zM571 200h1V254h-1zM572 174h1V254h-1zM573 200h1V254h-1zM574 250h1V254h-1zM575 250h1V254h-1zM576 245h1V254h-1zM577 251h1V254h-1zM578 246h1V254h-1zM579 249h1V254h-1zM580 248h1V254h-1zM581 233h1V254h-1zM582 236h1V254h-1zM583 249h1V254h-1zM584 184h1V254h-1zM585 195h1V254h-1zM586 203h1V254h-1zM587 200h1V254h-1zM588 205h1V254h-1zM589 215h1V254h-1zM590 238h1V254h-1zM591 251h1V254h-1zM592 249h1V254h-1z" fill="#00c800"/>
<path d="M190 241.17 L191 240.50 L192 240.50 L193 240.50 L194 239.83 L195 239.83 L196 239.83 L197 239.17 L198 239.17 L199 239.17 L200 239.17 L201 239.17 L202 238.50 L203 238.50 L204 238.50 L205 238.50 L206 238.50 L207 237.83 L208 237.83 L209 237.83 L210 237.83 L211 237.83 L212 237.17 L213 237.17 L214 237.17 L215 237.17 L216 237.17 L217 237.17 L218 236.50 L219 236.50 L220 236.50 L221 236.50 L222 236.50 L223 236.50 L224 235.83 L225 235.83 L226 235.83 L227 235.83 L228 235.83 L229 235.83 L230 235.83 L231 235.17 L232 235.17 L233 235.17 L234 235.17 L235 235.17 L236 235.17 L237 235.17 L238 234.50 L239 234.50 L240 234.50 L241 234.50 L242 234.50 L243 234.50 L244 234.50 L245 233.83 L246 233.83 L247 233.83 L248 233.83 L249 233.83 L250 233.83 L251 233.83 L252 233.83 L253 233.17 L254 233.17 L255 233.17 L256 233.17 L257 233.17 L258 233.17 L259 233.17 L260 233.17 L261 232.50 L262 232.50 L263 232.50 L264 232.50 L265 232.50 L266 232.50 L267 232.50 L268 232.50 L269 231.83 L270 231.83 L271 231.83 L272 231.83 L273 231.83 L274 231.83 L275 231.83 L276 231.83 L277 231.83 L278 231.17 L279 231.17 L280 231.17 L281 231.17 L282 231.17 L283 231.17 L284 231.17 L285 231.17 L286 231.17 L287 230.50 L288 230.50 L289 230.50 L290 230.50 L291 230.50 L292 230.50 L293 230.50 L294 230.50 L295 230.50 L296 229.83 L297 229.83 L298 229.83 L299 229.83 L300 229.83 L301 229.83 L302 229.83 L303 229.83 L304 229.83 L305 229.17 L306 229.17 L307 229.17 L308 229.17 L309 229.17 L310 229.17 L311 229.17 L312 229.17 L313 229.17 L314 229.17 L315 228.50 L316 228.50 L317 228.50 L318 228.50 L319 228.50 L320 228.50 L321 228.50 L322 228.50 L323 228.50 L324 227.83 L325 227.83 L326 227.83 L327 227.83 L328 227.83 L329 227.83 L330 227.83 L331 227.83 L332 227.83 L333 227.83 L334 227.17 L335 227.17 L336 227.17 L337 227.17 L338 227.17 L339 227.17 L340 227.17 L341 227.17 L342 227.17 L343 227.17 L344 226.50 L345 226.50 L346 226.50 L347 226.50 L348 226.50 L349 226.50 L350 226.50 L351 226.50 L352 226.50 L353 226.50 L354 226.50 L355 225.83 L356 225.83 L357 225.83 L358 225.83 L359 225.83 L360 225.83 L361 225.83 L362 225.83 L363 225.83 L364 225.83 L365 225.17 L366 225.17 L367 225.17 L368 225.17 L369 225.17 L370 225.17 L371 225.17 L372 225.17 L373 225.17 L374 225.17 L375 225.17 L376 224.50 L377 224.50 L378 224.50 L379 224.50 L380 224.50 L381 224.50 L382 224.50 L383 224.50 L384 224.50 L385 224.50 L386 224.50 L387 223.83 L388 223.83 L389 223.83 L390 223.83 L391 223.83 L392 223.83 L393 223.83 L394 223.83 L395 223.83 L396 224.50 L397 224.50 L398 224.50 L399 224.50 L400 224.50 L401 224.50 L402 224.50 L403 224.50 L404 224.50 L405 224.50 L406 224.50 L407 225.17 L408 225.17 L409 225.17 L410 225.17 L411 225.17 L412 225.17 L413 225.17 L414 225.17 L415 225.17 L416 225.17 L417 225.17 L418 225.83 L419 225.83 L420 225.83 L421 225.83 L422 225.83 L423 225.83 L424 225.83 L425 225.83 L426 225.83 L427 225.83 L428 226.50 L429 226.50 L430 226.50 L431 226.50 L432 226.50 L433 226.50 L434 226.50 L435 226.50 L436 226.50 L437 226.50 L438 226.50 L439 227.17 L440 227.17 L441 227.17 L442 227.17 L443 227.17 L444 227.17 L445 227.17 L446 227.17 L447 227.17 L448 227.17 L449 227.83 L450 227.83 L451 227.83 L452 227.83 L453 227.83 L454 227.83 L455 227.83 L456 227.83 L457 227.83 L458 227.83 L459 228.50 L460 228.50 L461 228.50 L462 228.50 L463 228.50 L464 228.50 L465 228.50 L466 228.50 L467 228.50 L468 229.17 L469 229.17 L470 229.17 L471 229.17 L472 229.17 L473 229.17 L474 229.17 L475 229.17 L476 229.17 L477 229.17 L478 229.83 L479 229.83 L480 229.83 L481 229.83 L482 229.83 L483 229.83 L484 229.83 L485 229.83 L486 229.83 L487 230.50 L488 230.50 L489 230.50 L490 230.50 L491 230.50 L492 230.50 L493 230.50 L494 230.50 L495 230.50 L496 231.17 L497 231.17 L498 231.17 L499 231.17 L500 231.17 L501 231.17 L502 231.17 L503 231.17 L504 231.17 L505 231.83 L506 231.83 L507 231.83 L508 231.83 L509 231.83 L510 231.83 L511 231.83 L512 231.83 L513 231.83 L514 232.50 L515 232.50 L516 232.50 L517 232.50 L518 232.50 L519 232.50 L520 232.50 L521 232.50 L522 233.17 L523 233.17 L524 233.17 L525 233.17 L526 233.17 L527 233.17 L528 233.17 L529 233.17 L530 233.83 L531 233.83 L532 233.83 L533 233.83 L534 233.83 L535 233.83 L536 233.83 L537 233.83 L538 234.50 L539 234.50 L540 234.50 L541 234.50 L542 234.50 L543 234.50 L544 234.50 L545 235.17 L546 235.17 L547 235.17 L548 235.17 L549 235.17 L550 235.17 L551 235.17 L552 235.83 L553 235.83 L554 235.83 L555 235.83 L556 235.83 L557 235.83 L558 235.83 L559 236.50 L560 236.50 L561 236.50 L562 236.50 L563 236.50 L564 236.50 L565 237.17 L566 237.17 L567 237.17 L568 237.17 L569 237.17 L570 237.17 L571 237.83 L572 237.83 L573 237.83 L574 237.83 L575 237.83 L576 238.50 L577 238.50 L578 238.50 L579 238.50 L580 238.50 L581 239.17 L582 239.17 L583 239.17 L584 239.17 L585 239.17 L586 239.83 L587 239.83 L588 239.83 L589 240.50 L590 240.50 L591 240.50 L592 241.17" fill="none" stroke="#98daff" stroke-width="1.5" shape-rendering="auto"/>
<rect x="391" y="224" width="1" height="10" fill="#b8e6ff"/>
<path d="M191 404h1V410h-1zM192 404h1V410h-1zM193 404h1V410h-1zM194 397h1V410h-1zM195 404h1V410h-1zM196 385h1V410h-1zM197 391h1V410h-1zM198 404h1V410h-1zM199 404h1V410h-1zM200 404h1V410h-1zM201 404h1V410h-1zM202 404h1V410h-1zM203 397h1V410h-1zM204 397h1V410h-1zM205 404h1V410h-1zM206 397h1V410h-1zM207 404h1V410h-1zM208 404h1V410h-1zM209 404h1V410h-1zM210 404h1V410h-1zM211 397h1V410h-1zM212 404h1V410h-1zM213 404h1V410h-1zM214 404h1V410h-1zM215 397h1V410h-1zM217 385h1V410h-1zM218 385h1V410h-1zM219 391h1V410h-1zM220 404h1V410h-1zM221 404h1V410h-1zM222 404h1V410h-1zM223 404h1V410h-1zM224 404h1V410h-1zM225 404h1V410h-1zM226 404h1V410h-1zM227 404h1V410h-1zM228 404h1V410h-1zM229 404h1V410h-1zM230 404h1V410h-1zM231 404h1V410h-1zM232 397h1V410h-1zM233 391h1V410h-1zM234 397h1V410h-1zM235 404h1V410h-1zM236 397h1V410h-1zM237 397h1V410h-1zM238 397h1V410h-1zM239 397h1V410h-1zM240 397h1V410h-1zM241 404h1V410h-1zM242 404h1V410h-1zM243 404h1V410h-1zM244 397h1V410h-1zM245 404h1V410h-1zM246 404h1V410h-1zM247 404h1V410h-1zM248 404h1V410h-1zM249 404h1V410h-1zM250 404h1V410h-1zM251 397h1V410h-1zM252 404h1V410h-1zM253 404h1V410h-1zM257 385h1V410h-1zM258 397h1V410h-1zM259 404h1V410h-1zM260 397h1V410h-1zM261 404h1V410h-1zM262 404h1V410h-1zM263 404h1V410h-1zM264 404h1V410h-1zM265 404h1V410h-1zM266 404h1V410h-1zM267 404h1V410h-1zM268 404h1V410h-1zM269 404h1V410h-1zM270 404h1V410h-1zM271 404h1V410h-1zM272 391h1V410h-1zM274 391h1V410h-1zM275 404h1V410h-1zM276 404h1V410h-1zM277 404h1V410h-1zM278 404h1V410h-1zM279 404h1V410h-1zM280 404h1V410h-1zM281 404h1V410h-1zM283 391h1V410h-1zM284 404h1V410h-1zM285 404h1V410h-1zM286 397h1V410h-1zM287 397h1V410h-1zM288 404h1V410h-1zM289 404h1V410h-1zM290 404h1V410h-1zM291 397h1V410h-1zM292 404h1V410h-1zM293 404h1V410h-1zM294 404h1V410h-1zM295 397h1V410h-1zM296 397h1V410h-1zM297 404h1V410h-1zM298 404h1V410h-1zM299 404h1V410h-1zM300 397h1V410h-1zM301 397h1V410h-1zM302 397h1V410h-1zM303 397h1V410h-1zM304 397h1V410h-1zM305 397h1V410h-1zM306 397h1V410h-1zM307 404h1V410h-1zM308 397h1V410h-1zM309 397h1V410h-1zM310 397h1V410h-1zM311 397h1V410h-1zM312 397h1V410h-1zM313 397h1V410h-1zM314 397h1V410h-1zM315 404h1V410h-1zM316 404h1V410h-1zM317 397h1V410h-1zM318 397h1V410h-1zM319 404h1V410h-1zM320 397h1V410h-1zM321 404h1V410h-1zM322 404h1V410h-1zM323 404h1V410h-1zM324 404h1V410h-1zM325 404h1V410h-1zM326 404h1V410h-1zM328 391h1V410h-1zM329 404h1V410h-1zM330 404h1V410h-1zM331 404h1V410h-1zM332 404h1V410h-1zM333 404h1V410h-1zM334 397h1V410h-1zM335 397h1V410h-1zM336 397h1V410h-1zM337 397h1V410h-1zM338 404h1V410h-1zM339 404h1V410h-1zM340 397h1V410h-1zM341 404h1V410h-1zM342 404h1V410h-1zM343 404h1V410h-1zM344 397h1V410h-1zM345 397h1V410h-1zM346 397h1V410h-1zM347 404h1V410h-1zM348 397h1V410h-1zM349 397h1V410h-1zM350 397h1V410h-1zM351 397h1V410h-1zM352 404h1V410h-1zM353 404h1V410h-1zM354 404h1V410h-1zM355 404h1V410h-1zM356 404h1V410h-1zM357 404h1V410h-1zM358 404h1V410h-1zM359 404h1V410h-1zM360 397h1V410h-1zM361 397h1V410h-1zM362 397h1V410h-1zM363 397h1V410h-1zM364 404h1V410h-1zM365 397h1V410h-1zM366 397h1V410h-1zM367 397h1V410h-1zM368 397h1V410h-1zM369 397h1V410h-1zM370 397h1V410h-1zM371 397h1V410h-1zM372 391h1V410h-1zM373 391h1V410h-1zM374 391h1V410h-1zM375 397h1V410h-1zM376 391h1V410h-1zM377 397h1V410h-1zM378 391h1V410h-1zM379 397h1V410h-1zM380 391h1V410h-1zM383 391h1V410h-1zM417 385h1V410h-1zM420 385h1V410h-1zM423 385h1V410h-1zM424 385h1V410h-1zM425 391h1V410h-1zM429 385h1V410h-1zM435 385h1V410h-1zM436 391h1V410h-1zM441 385h1V410h-1zM442 385h1V410h-1zM448 385h1V410h-1zM449 391h1V410h-1zM454 385h1V410h-1zM455 385h1V410h-1zM456 391h1V410h-1zM457 397h1V410h-1zM460 391h1V410h-1zM461 397h1V410h-1zM462 397h1V410h-1zM463 397h1V410h-1zM464 397h1V410h-1zM465 391h1V410h-1zM466 391h1V410h-1zM468 391h1V410h-1zM469 391h1V410h-1zM470 391h1V410h-1zM471 397h1V410h-1zM472 397h1V410h-1zM473 397h1V410h-1zM474 397h1V410h-1zM476 385h1V410h-1zM477 397h1V410h-1zM478 391h1V410h-1zM479 391h1V410h-1zM480 397h1V410h-1zM481 391h1V410h-1zM482 397h1V410h-1zM483 397h1V410h-1zM486 397h1V410h-1zM489 385h1V410h-1zM490 397h1V410h-1zM491 397h1V410h-1zM492 397h1V410h-1zM493 391h1V410h-1zM494 397h1V410h-1zM495 385h1V410h-1zM501 385h1V410h-1zM503 391h1V410h-1zM504 397h1V410h-1zM505 391h1V410h-1zM506 397h1V410h-1zM513 397h1V410h-1zM514 385h1V410h-1zM515 391h1V410h-1zM516 391h1V410h-1zM517 391h1V410h-1zM519 385h1V410h-1zM520 397h1V410h-1zM521 391h1V410h-1zM522 391h1V410h-1zM523 397h1V410h-1zM528 397h1V410h-1zM529 397h1V410h-1zM532 385h1V410h-1zM533 385h1V410h-1zM534 397h1V410h-1zM535 391h1V410h-1zM536 397h1V410h-1zM537 397h1V410h-1zM538 397h1V410h-1zM539 385h1V410h-1zM540 385h1V410h-1zM541 391h1V410h-1zM542 397h1V410h-1zM543 397h1V410h-1zM544 397h1V410h-1zM545 397h1V410h-1zM546 391h1V410h-1zM547 391h1V410h-1zM548 385h1V410h-1zM549 391h1V410h-1zM552 391h1V410h-1zM553 397h1V410h-1zM557 391h1V410h-1zM558 397h1V410h-1zM559 391h1V410h-1zM561 391h1V410h-1zM562 391h1V410h-1zM563 391h1V410h-1zM564 391h1V410h-1zM565 397h1V410h-1zM567 385h1V410h-1zM568 397h1V410h-1zM569 397h1V410h-1zM574 397h1V410h-1zM575 391h1V410h-1zM576 397h1V410h-1zM577 397h1V410h-1zM578 397h1V410h-1zM579 397h1V410h-1zM580 397h1V410h-1zM581 385h1V410h-1zM582 391h1V410h-1zM583 391h1V410h-1zM590 391h1V410h-1zM591 391h1V410h-1zM592 397h1V410h-1z" fill="#00c800"/><path d="M216 372h1V410h-1zM254 372h1V410h-1zM255 372h1V410h-1zM273 378h1V410h-1zM282 378h1V410h-1zM382 378h1V410h-1zM384 378h1V410h-1zM385 378h1V410h-1zM386 372h1V410h-1zM411 372h1V410h-1zM412 372h1V410h-1zM413 378h1V410h-1zM415 378h1V410h-1zM416 378h1V410h-1zM419 372h1V410h-1zM421 378h1V410h-1zM422 372h1V410h-1zM426 372h1V410h-1zM428 372h1V410h-1zM430 378h1V410h-1zM432 372h1V410h-1zM434 372h1V410h-1zM437 378h1V410h-1zM440 372h1V410h-1zM443 378h1V410h-1zM451 378h1V410h-1zM453 372h1V410h-1zM459 378h1V410h-1zM467 378h1V410h-1zM475 378h1V410h-1zM484 378h1V410h-1zM485 378h1V410h-1zM487 378h1V410h-1zM488 378h1V410h-1zM496 378h1V410h-1zM497 378h1V410h-1zM498 372h1V410h-1zM499 372h1V410h-1zM500 378h1V410h-1zM502 372h1V410h-1zM507 378h1V410h-1zM512 378h1V410h-1zM525 372h1V410h-1zM526 378h1V410h-1zM527 378h1V410h-1zM530 378h1V410h-1zM531 372h1V410h-1zM551 372h1V410h-1zM555 378h1V410h-1zM556 378h1V410h-1zM560 378h1V410h-1zM570 378h1V410h-1zM571 372h1V410h-1zM573 378h1V410h-1zM585 372h1V410h-1zM586 372h1V410h-1zM587 372h1V410h-1zM588 378h1V410h-1zM589 378h1V410h-1z" fill="#3ccc00"/><path d="M256 360h1V410h-1zM327 353h1V410h-1zM381 366h1V410h-1zM387 366h1V410h-1zM388 353h1V410h-1zM389 360h1V410h-1zM395 353h1V410h-1zM396 353h1V410h-1zM398 353h1V410h-1zM399 353h1V410h-1zM400 360h1V410h-1zM401 360h1V410h-1zM402 353h1V410h-1zM403 360h1V410h-1zM404 360h1V410h-1zM405 366h1V410h-1zM406 360h1V410h-1zM407 360h1V410h-1zM408 366h1V410h-1zM409 366h1V410h-1zM414 353h1V410h-1zM418 360h1V410h-1zM431 366h1V410h-1zM439 366h1V410h-1zM445 360h1V410h-1zM446 360h1V410h-1zM447 366h1V410h-1zM452 353h1V410h-1zM458 360h1V410h-1zM508 366h1V410h-1zM510 366h1V410h-1zM511 366h1V410h-1zM518 366h1V410h-1zM524 360h1V410h-1zM550 366h1V410h-1zM554 360h1V410h-1zM572 353h1V410h-1zM584 353h1V410h-1z" fill="#78d000"/><path d="M390 347h1V410h-1zM410 347h1V410h-1zM427 347h1V410h-1zM433 347h1V410h-1zM438 347h1V410h-1zM444 341h1V410h-1zM509 347h1V410h-1z" fill="#a0d400"/><path d="M391 322h1V410h-1zM392 322h1V410h-1zM393 334h1V410h-1zM394 334h1V410h-1zM397 334h1V410h-1zM450 322h1V410h-1zM566 334h1V410h-1z" fill="#c8d800"/>
<rect x="191" y="117" width="6" height="8" fill="#007800"/><rect x="223" y="117" width="6" height="8" fill="#8cd2fa"/><rect x="293" y="117" width="6" height="8" fill="#ff8cf0"/>
<rect x="191" y="273" width="6" height="8" fill="#007800"/><rect x="219" y="273" width="6" height="8" fill="#d2a0d2"/><rect x="254" y="270" width="6" height="2" fill="#000"/>
</svg>
<span class="a" style="left:200.50px;top:115px;font-size:11px;line-height:12px;transform:scaleX(0.8500);transform-origin:0 0;-webkit-text-stroke:0.1px;">LDC</span>
<span class="a" style="left:232.10px;top:115px;font-size:11px;line-height:12px;transform:scaleX(0.9528);transform-origin:0 0;-webkit-text-stroke:0.1px;">Read speed</span>
<span class="a" style="left:301.90px;top:115px;font-size:11px;line-height:12px;transform:scaleX(0.9778);transform-origin:0 0;-webkit-text-stroke:0.1px;">Write speed</span>
<span class="a" style="left:199.80px;top:271px;font-size:11px;line-height:12px;transform:scaleX(0.8644);transform-origin:0 0;-webkit-text-stroke:0.1px;">BIS</span>
<span class="a" style="left:227.90px;top:271px;font-size:11px;line-height:12px;transform:scaleX(0.9370);transform-origin:0 0;-webkit-text-stroke:0.1px;">Jitter</span>
<span class="a" style="left:167.80px;top:230px;font-size:11px;line-height:12px;transform:scaleX(0.9402);transform-origin:0 0;-webkit-text-stroke:0.1px;">100</span>
<span class="a" style="left:167.80px;top:212px;font-size:11px;line-height:12px;transform:scaleX(0.9402);transform-origin:0 0;-webkit-text-stroke:0.1px;">200</span>
<span class="a" style="left:167.80px;top:194px;font-size:11px;line-height:12px;transform:scaleX(0.9402);transform-origin:0 0;-webkit-text-stroke:0.1px;">300</span>
<span class="a" style="left:167.80px;top:176px;font-size:11px;line-height:12px;transform:scaleX(0.9402);transform-origin:0 0;-webkit-text-stroke:0.1px;">400</span>
<span class="a" style="left:167.80px;top:158px;font-size:11px;line-height:12px;transform:scaleX(0.9402);transform-origin:0 0;-webkit-text-stroke:0.1px;">500</span>
<span class="a" style="left:167.80px;top:140px;font-size:11px;line-height:12px;transform:scaleX(0.9402);transform-origin:0 0;-webkit-text-stroke:0.1px;">600</span>
<span class="a" style="left:167.80px;top:122px;font-size:11px;line-height:12px;transform:scaleX(0.9402);transform-origin:0 0;-webkit-text-stroke:0.1px;">700</span>
<span class="a" style="left:179.41px;top:373px;font-size:11px;line-height:12px;transform:scaleX(0.9500);transform-origin:0 0;-webkit-text-stroke:0.1px;">5</span>
<span class="a" style="left:173.61px;top:341px;font-size:11px;line-height:12px;transform:scaleX(0.9500);transform-origin:0 0;-webkit-text-stroke:0.1px;">10</span>
<span class="a" style="left:173.61px;top:310px;font-size:11px;line-height:12px;transform:scaleX(0.9500);transform-origin:0 0;-webkit-text-stroke:0.1px;">15</span>
<span class="a" style="left:173.61px;top:278px;font-size:11px;line-height:12px;transform:scaleX(0.9500);transform-origin:0 0;-webkit-text-stroke:0.1px;">20</span>
<span class="a" style="left:626.60px;top:234px;font-size:11px;line-height:12px;transform:scaleX(0.9152);transform-origin:0 0;-webkit-text-stroke:0.1px;">2 X</span>
<span class="a" style="left:626.60px;top:220px;font-size:11px;line-height:12px;transform:scaleX(0.9152);transform-origin:0 0;-webkit-text-stroke:0.1px;">4 X</span>
<span class="a" style="left:626.60px;top:206px;font-size:11px;line-height:12px;transform:scaleX(0.9152);transform-origin:0 0;-webkit-text-stroke:0.1px;">6 X</span>
<span class="a" style="left:626.60px;top:192px;font-size:11px;line-height:12px;transform:scaleX(0.9152);transform-origin:0 0;-webkit-text-stroke:0.1px;">8 X</span>
<span class="a" style="left:626.60px;top:178px;font-size:11px;line-height:12px;transform:scaleX(0.9248);transform-origin:0 0;-webkit-text-stroke:0.1px;">10 X</span>
<span class="a" style="left:626.60px;top:164px;font-size:11px;line-height:12px;transform:scaleX(0.9248);transform-origin:0 0;-webkit-text-stroke:0.1px;">12 X</span>
<span class="a" style="left:626.60px;top:150px;font-size:11px;line-height:12px;transform:scaleX(0.9248);transform-origin:0 0;-webkit-text-stroke:0.1px;">14 X</span>
<span class="a" style="left:626.60px;top:136px;font-size:11px;line-height:12px;transform:scaleX(0.9248);transform-origin:0 0;-webkit-text-stroke:0.1px;">16 X</span>
<span class="a" style="left:626.60px;top:122px;font-size:11px;line-height:12px;transform:scaleX(0.9248);transform-origin:0 0;-webkit-text-stroke:0.1px;">18 X</span>
<span class="a" style="left:626.10px;top:378px;font-size:11px;line-height:12px;transform:scaleX(0.9623);transform-origin:0 0;-webkit-text-stroke:0.1px;">2%</span>
<span class="a" style="left:626.10px;top:353px;font-size:11px;line-height:12px;transform:scaleX(0.9623);transform-origin:0 0;-webkit-text-stroke:0.1px;">4%</span>
<span class="a" style="left:626.10px;top:328px;font-size:11px;line-height:12px;transform:scaleX(0.9623);transform-origin:0 0;-webkit-text-stroke:0.1px;">6%</span>
<span class="a" style="left:626.10px;top:303px;font-size:11px;line-height:12px;transform:scaleX(0.9623);transform-origin:0 0;-webkit-text-stroke:0.1px;">8%</span>
<span class="a" style="left:626.10px;top:278px;font-size:11px;line-height:12px;transform:scaleX(0.9727);transform-origin:0 0;-webkit-text-stroke:0.1px;">10%</span>
<span class="a" style="left:181.49px;top:254px;font-size:11px;line-height:12px;transform:scaleX(0.9300);transform-origin:0 0;-webkit-text-stroke:0.1px;">0.0</span>
<span class="a" style="left:224.69px;top:254px;font-size:11px;line-height:12px;transform:scaleX(0.9300);transform-origin:0 0;-webkit-text-stroke:0.1px;">5.0</span>
<span class="a" style="left:265.05px;top:254px;font-size:11px;line-height:12px;transform:scaleX(0.9300);transform-origin:0 0;-webkit-text-stroke:0.1px;">10.0</span>
<span class="a" style="left:308.25px;top:254px;font-size:11px;line-height:12px;transform:scaleX(0.9300);transform-origin:0 0;-webkit-text-stroke:0.1px;">15.0</span>
<span class="a" style="left:351.45px;top:254px;font-size:11px;line-height:12px;transform:scaleX(0.9300);transform-origin:0 0;-webkit-text-stroke:0.1px;">20.0</span>
<span class="a" style="left:394.65px;top:254px;font-size:11px;line-height:12px;transform:scaleX(0.9300);transform-origin:0 0;-webkit-text-stroke:0.1px;">25.0</span>
<span class="a" style="left:437.85px;top:254px;font-size:11px;line-height:12px;transform:scaleX(0.9300);transform-origin:0 0;-webkit-text-stroke:0.1px;">30.0</span>
<span class="a" style="left:481.05px;top:254px;font-size:11px;line-height:12px;transform:scaleX(0.9300);transform-origin:0 0;-webkit-text-stroke:0.1px;">35.0</span>
<span class="a" style="left:524.25px;top:254px;font-size:11px;line-height:12px;transform:scaleX(0.9300);transform-origin:0 0;-webkit-text-stroke:0.1px;">40.0</span>
<span class="a" style="left:567.45px;top:254px;font-size:11px;line-height:12px;transform:scaleX(0.9300);transform-origin:0 0;-webkit-text-stroke:0.1px;">45.0</span>
<span class="a" style="left:602.20px;top:254px;font-size:11px;line-height:12px;transform:scaleX(0.9356);transform-origin:0 0;-webkit-text-stroke:0.1px;">50.0 GB</span>
<span class="a" style="left:181.49px;top:410px;font-size:11px;line-height:12px;transform:scaleX(0.9300);transform-origin:0 0;-webkit-text-stroke:0.1px;">0.0</span>
<span class="a" style="left:224.69px;top:410px;font-size:11px;line-height:12px;transform:scaleX(0.9300);transform-origin:0 0;-webkit-text-stroke:0.1px;">5.0</span>
<span class="a" style="left:265.05px;top:410px;font-size:11px;line-height:12px;transform:scaleX(0.9300);transform-origin:0 0;-webkit-text-stroke:0.1px;">10.0</span>
<span class="a" style="left:308.25px;top:410px;font-size:11px;line-height:12px;transform:scaleX(0.9300);transform-origin:0 0;-webkit-text-stroke:0.1px;">15.0</span>
<span class="a" style="left:351.45px;top:410px;font-size:11px;line-height:12px;transform:scaleX(0.9300);transform-origin:0 0;-webkit-text-stroke:0.1px;">20.0</span>
<span class="a" style="left:394.65px;top:410px;font-size:11px;line-height:12px;transform:scaleX(0.9300);transform-origin:0 0;-webkit-text-stroke:0.1px;">25.0</span>
<span class="a" style="left:437.85px;top:410px;font-size:11px;line-height:12px;transform:scaleX(0.9300);transform-origin:0 0;-webkit-text-stroke:0.1px;">30.0</span>
<span class="a" style="left:481.05px;top:410px;font-size:11px;line-height:12px;transform:scaleX(0.9300);transform-origin:0 0;-webkit-text-stroke:0.1px;">35.0</span>
<span class="a" style="left:524.25px;top:410px;font-size:11px;line-height:12px;transform:scaleX(0.9300);transform-origin:0 0;-webkit-text-stroke:0.1px;">40.0</span>
<span class="a" style="left:567.45px;top:410px;font-size:11px;line-height:12px;transform:scaleX(0.9300);transform-origin:0 0;-webkit-text-stroke:0.1px;">45.0</span>
<span class="a" style="left:602.20px;top:410px;font-size:11px;line-height:12px;transform:scaleX(0.9356);transform-origin:0 0;-webkit-text-stroke:0.1px;">50.0 GB</span>

<!-- stats -->
<span class="a" style="left:252.20px;top:429px;font-size:12.3px;line-height:14px;transform:scaleX(0.7805);transform-origin:0 0;">LDC</span>
<span class="a" style="left:310.20px;top:429px;font-size:12.3px;line-height:14px;transform:scaleX(0.7778);transform-origin:0 0;">BIS</span>
<span class="a" style="left:162.60px;top:446px;font-size:12.3px;line-height:14px;transform:scaleX(0.8905);transform-origin:0 0;">Avg</span>
<span class="a" style="left:246.60px;top:446px;font-size:12.3px;line-height:14px;transform:scaleX(0.8629);transform-origin:0 0;color:#0000ff;">11.89</span>
<span class="a" style="left:306.10px;top:446px;font-size:12.3px;line-height:14px;transform:scaleX(0.8536);transform-origin:0 0;color:#0000ff;">0.20</span>
<span class="a" style="left:162.60px;top:462px;font-size:12.3px;line-height:14px;transform:scaleX(0.8922);transform-origin:0 0;">Max</span>
<span class="a" style="left:255.20px;top:462px;font-size:12.3px;line-height:14px;transform:scaleX(0.8390);transform-origin:0 0;color:#0000ff;">685</span>
<span class="a" style="left:315.60px;top:462px;font-size:12.3px;line-height:14px;transform:scaleX(0.7956);transform-origin:0 0;color:#0000ff;">14</span>
<span class="a" style="left:160.90px;top:478px;font-size:12.3px;line-height:14px;transform:scaleX(0.8962);transform-origin:0 0;">Total</span>
<span class="a" style="left:229.90px;top:478px;font-size:12.3px;line-height:14px;transform:scaleX(0.8810);transform-origin:0 0;color:#0000ff;">9081340</span>
<span class="a" style="left:291.10px;top:478px;font-size:12.3px;line-height:14px;transform:scaleX(0.8634);transform-origin:0 0;color:#0000ff;">149783</span>
<div class="a" style="left:395px;top:430px;width:13px;height:13px;border:1px solid #333;background:#fff"><svg class="a" style="left:0;top:0" width="11" height="11" viewBox="0 0 11 11"><path d="M1.500 5.500l3 3 5-6" stroke="#222" stroke-width="1.2" fill="none"/></svg></div>
<span class="a" style="left:416.80px;top:430px;font-size:12.3px;line-height:14px;transform:scaleX(0.9251);transform-origin:0 0;">Jitter</span>
<span class="a" style="left:414.20px;top:446px;font-size:12.3px;line-height:14px;transform:scaleX(0.8505);transform-origin:0 0;color:#0000ff;">-0.1%</span>
<span class="a" style="left:417.60px;top:462px;font-size:12.3px;line-height:14px;transform:scaleX(0.8536);transform-origin:0 0;color:#0000ff;">0.0%</span>
<span class="a" style="left:460.80px;top:434px;font-size:12.3px;line-height:14px;transform:scaleX(0.8876);transform-origin:0 0;">Speed</span>
<span class="a" style="left:519.70px;top:434px;font-size:12.3px;line-height:14px;transform:scaleX(0.8483);transform-origin:0 0;color:#0000ff;">1.75 X</span>
<span class="a" style="left:460.80px;top:462px;font-size:12.3px;line-height:14px;transform:scaleX(0.9384);transform-origin:0 0;">Position</span>
<span class="a" style="left:519.70px;top:462px;font-size:12.3px;line-height:14px;transform:scaleX(0.8806);transform-origin:0 0;color:#0000ff;">47731 MB</span>
<span class="a" style="left:460.80px;top:478px;font-size:12.3px;line-height:14px;transform:scaleX(0.8580);transform-origin:0 0;">Samples</span>
<span class="a" style="left:519.70px;top:478px;font-size:12.3px;line-height:14px;transform:scaleX(0.8756);transform-origin:0 0;color:#0000ff;">763367</span>
<div class="combo" style="left:575px;top:428px;width:75px;height:21px"><svg class="a" style="left:61px;top:7px" width="10" height="6" viewBox="0 0 10 6"><path d="M0.500 0.500L4.500 4.500 8.500 0.500" stroke="#444" stroke-width="1.1" fill="none"/></svg></div>
<span class="a" style="left:578.40px;top:432px;font-size:12.3px;line-height:14px;transform:scaleX(0.8502);transform-origin:0 0;">4.0 X</span>
<div class="btn" style="left:576px;top:452px;width:73px;height:21px"></div><span class="a" style="left:590.00px;top:456px;font-size:12.3px;line-height:14px;transform:scaleX(0.9579);transform-origin:0 0;">Start full</span>
<div class="btn" style="left:575px;top:479px;width:73px;height:21px"></div><span class="a" style="left:587.10px;top:483px;font-size:12.3px;line-height:14px;transform:scaleX(0.9368);transform-origin:0 0;">Start part</span>

<!-- status bar -->
<div class="a" style="left:1px;top:505px;width:659px;height:18px;background:#f0f0f0"></div>
<div class="a" style="left:1px;top:504px;width:155px;height:1px;background:#dcdce4"></div>
<span class="a" style="left:3.00px;top:508px;font-size:12.3px;line-height:14px;transform:scaleX(0.8658);transform-origin:0 0;">Test completed</span><span class="a" style="left:454.90px;top:508px;font-size:12.3px;line-height:14px;transform:scaleX(0.8082);transform-origin:0 0;">100.0%</span><span class="a" style="left:601.70px;top:508px;font-size:12.3px;line-height:14px;transform:scaleX(0.8409);transform-origin:0 0;">63:51</span>
<div class="a" style="left:141px;top:506px;width:1px;height:16px;background:#c8c8c8"></div>
<div class="a" style="left:146px;top:508px;width:302px;height:13px;background:#d8d8d8"></div>
<div class="a" style="left:147px;top:509px;width:300px;height:11px;background:#06b025"></div>
<div class="a" style="left:449px;top:506px;width:1px;height:16px;background:#d4d4d4"></div>
<div class="a" style="left:507px;top:506px;width:1px;height:16px;background:#c8c8c8"></div>
<div class="a" style="left:630px;top:506px;width:1px;height:16px;background:#c8c8c8"></div>
<svg class="a" style="left:647px;top:510px" width="12" height="12" viewBox="0 0 12 12"><g fill="#b0b0b8"><rect x="9" y="9" width="2" height="2"/><rect x="6" y="9" width="2" height="2"/><rect x="9" y="6" width="2" height="2"/><rect x="3" y="9" width="2" height="2"/><rect x="6" y="6" width="2" height="2"/><rect x="9" y="3" width="2" height="2"/></g></svg>
</body></html>
